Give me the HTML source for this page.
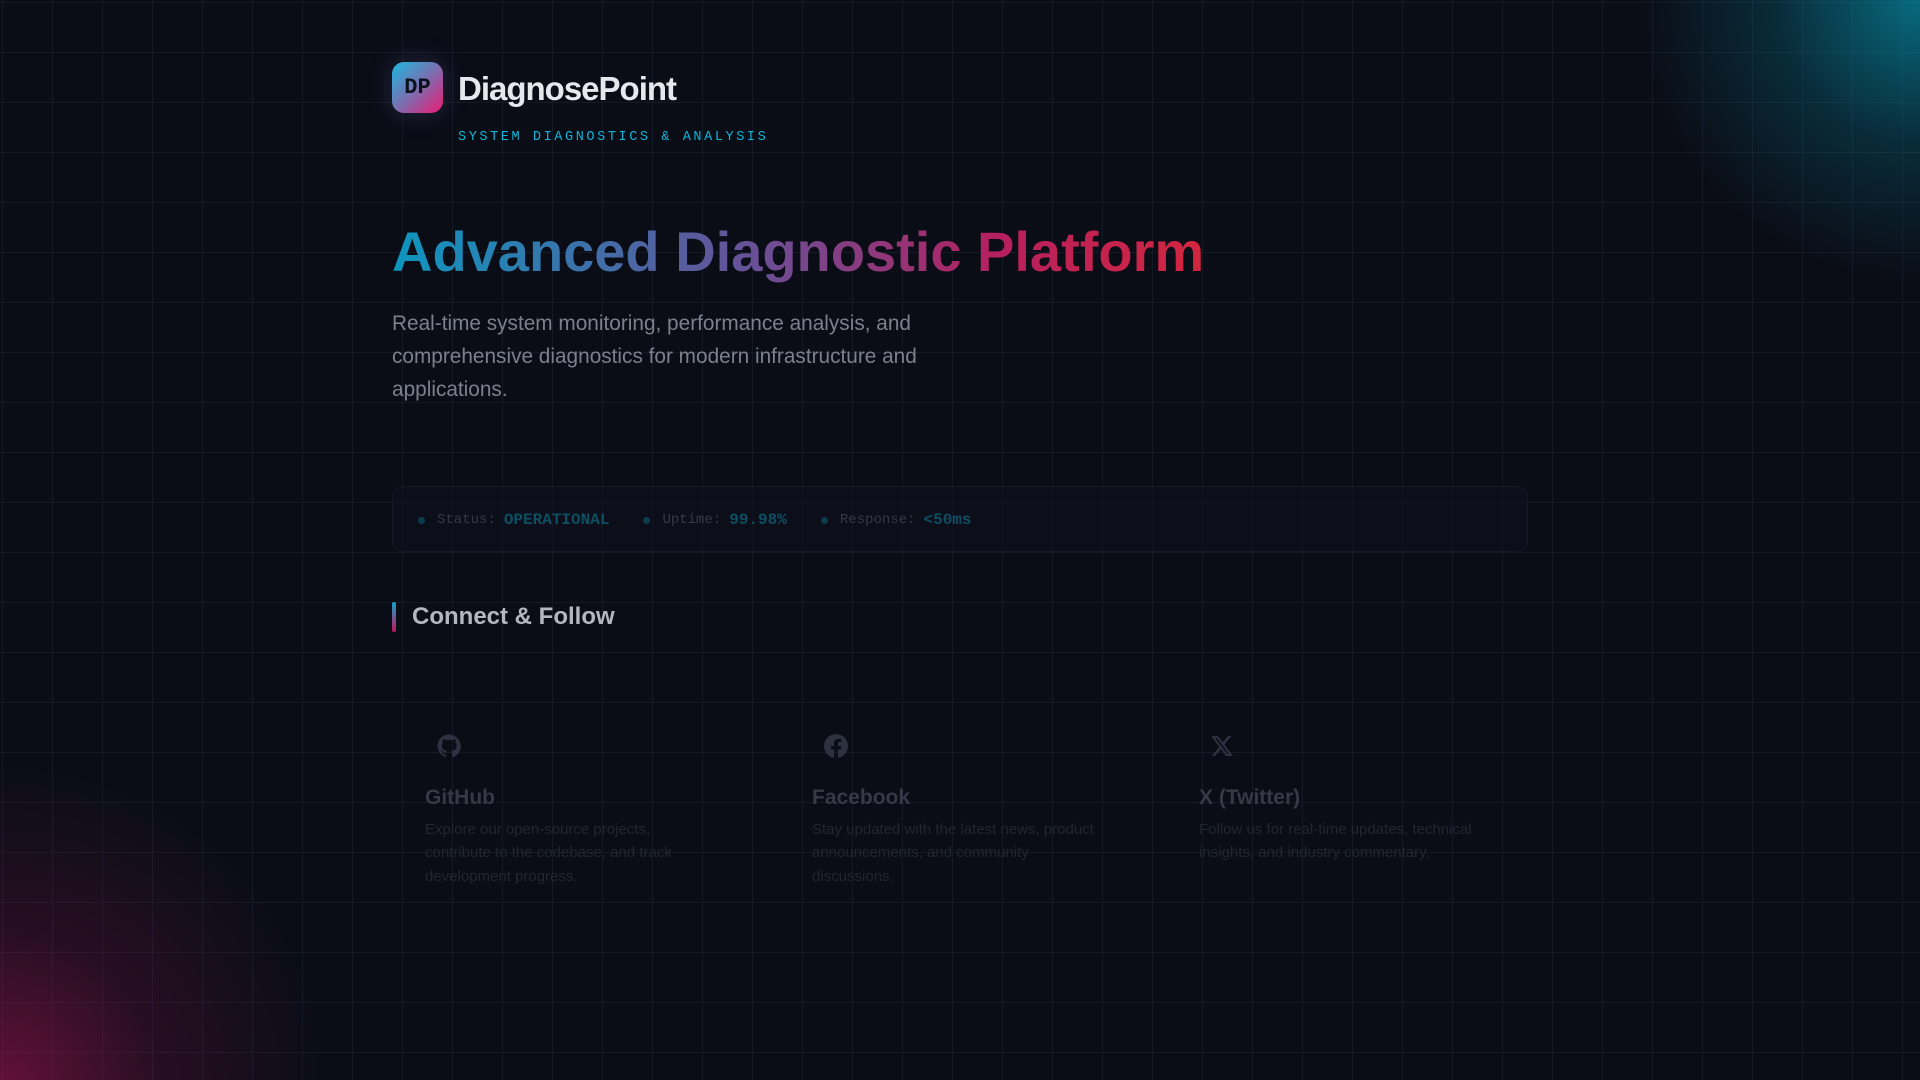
<!DOCTYPE html>
<html><head><meta charset="utf-8"><style>
*{margin:0;padding:0;box-sizing:border-box}
html,body{width:1920px;height:1080px;overflow:hidden}
body{background:#0a0d16;font-family:"Liberation Sans",sans-serif;position:relative}
.bg{position:absolute;left:0;top:0;width:1920px;height:1080px;overflow:hidden}
.grid{position:absolute;inset:0;background-image:linear-gradient(#141926 1px,transparent 1px),linear-gradient(90deg,#141926 1px,transparent 1px);background-size:50px 50px;background-position:2px 2px}
.g1{position:absolute;left:1630px;top:-290px;width:580px;height:580px;border-radius:50%;background:radial-gradient(circle,rgba(6,182,212,.55) 0%,rgba(6,150,180,.22) 35%,rgba(10,13,22,0) 68%)}
.g2{position:absolute;left:-330px;top:760px;width:660px;height:660px;border-radius:50%;background:radial-gradient(circle,rgba(190,20,90,.5) 0%,rgba(150,20,80,.2) 35%,rgba(10,13,22,0) 70%)}
.logo{position:absolute;left:392px;top:62px;width:51px;height:51px;border-radius:12px;background:linear-gradient(135deg,#1cb8de,#7a6fb0 50%,#ec1a72);box-shadow:0 0 25px rgba(120,120,200,.25);font-family:"Liberation Mono",monospace;font-weight:bold;font-size:22px;color:#0d111c;display:flex;align-items:center;justify-content:center}
.brand{position:absolute;left:458px;top:70px;font-size:33px;font-weight:bold;color:#e6e8ee;letter-spacing:-1px}
.sub{position:absolute;left:458px;top:130px;font-family:"Liberation Mono",monospace;font-size:13.5px;letter-spacing:2.6px;color:#0fb4d8}
h1{position:absolute;left:392px;top:219px;font-size:56px;font-weight:bold;background:linear-gradient(90deg,#0d96bf 0%,#6a4f96 45%,#b6205e 75%,#d3263f 100%);-webkit-background-clip:text;background-clip:text;color:transparent;white-space:nowrap}
.p{position:absolute;left:392px;top:307px;width:580px;font-size:20.8px;line-height:33px;color:#7c808c}
.stat{position:absolute;left:392px;top:486px;width:1136px;height:66px;border:1px solid #141a26;border-radius:12px;background:rgba(14,18,28,.5);font-family:"Liberation Mono",monospace;display:flex;align-items:center;padding-left:25px;font-size:14px;color:#343a46;padding-top:2px}
.stat .d{width:7px;height:7px;border-radius:50%;background:#0b3c4e;margin-right:12px}
.stat b{color:#0e4e62;font-size:16px;margin-left:8px;margin-right:34px}
.cf{position:absolute;left:392px;top:602px;width:4px;height:30px;border-radius:2px;background:linear-gradient(#12a4cc,#c0155e)}
.cft{position:absolute;left:412px;top:603px;font-size:24px;font-weight:bold;color:#b3b7c0}
.ct{position:absolute;top:786px;font-size:21px;font-weight:bold;color:#363946}
.cd{position:absolute;top:818px;width:290px;font-size:15px;line-height:23.3px;color:#22262f}
</style></head><body>
<div class="bg"><div class="grid"></div><div class="g1"></div><div class="g2"></div></div>
<div class="logo">DP</div>
<div class="brand">DiagnosePoint</div>
<div class="sub">SYSTEM DIAGNOSTICS &amp; ANALYSIS</div>
<h1>Advanced Diagnostic Platform</h1>
<div class="p">Real-time system monitoring, performance analysis, and comprehensive diagnostics for modern infrastructure and applications.</div>
<div class="stat"><span class="d"></span>Status:<b>OPERATIONAL</b><span class="d"></span>Uptime:<b>99.98%</b><span class="d"></span>Response:<b>&lt;50ms</b></div>
<div class="cf"></div><div class="cft">Connect &amp; Follow</div>

<svg style="position:absolute;left:437px;top:734px" width="24" height="24" viewBox="0 0 24 24"><path fill="#2e3240" d="M12 .5C5.6.5.5 5.6.5 12c0 5.1 3.3 9.4 7.9 10.9.6.1.8-.3.8-.6v-2c-3.2.7-3.9-1.5-3.9-1.5-.5-1.3-1.3-1.7-1.3-1.7-1-.7.1-.7.1-.7 1.2.1 1.8 1.2 1.8 1.2 1 1.8 2.800 1.3 3.500 1 .1-.8.4-1.3.7-1.6-2.6-.3-5.3-1.3-5.3-5.7 0-1.3.5-2.3 1.2-3.1-.1-.3-.5-1.5.1-3.1 0 0 1-.3 3.2 1.2a11 11 0 0 1 5.8 0c2.2-1.5 3.2-1.2 3.2-1.2.6 1.6.2 2.8.1 3.1.7.8 1.2 1.9 1.2 3.1 0 4.4-2.7 5.4-5.3 5.7.4.4.8 1.1.8 2.2v3.3c0 .3.2.7.8.6 4.6-1.5 7.9-5.8 7.9-10.9C23.5 5.6 18.4.5 12 .5z"/></svg>
<div class="ct" style="left:425px">GitHub</div>
<div class="cd" style="left:425px">Explore our open-source projects, contribute to the codebase, and track development progress.</div>

<svg style="position:absolute;left:824px;top:734px" width="24" height="24" viewBox="0 0 24 24"><path fill="#2e3240" d="M24 12a12 12 0 1 0-13.9 11.9v-8.4H7.1V12h3V9.4c0-3 1.8-4.7 4.5-4.7 1.3 0 2.7.2 2.7.2v3h-1.5c-1.5 0-2 .9-2 1.9V12h3.4l-.5 3.5h-2.9v8.4A12 12 0 0 0 24 12z"/></svg>
<div class="ct" style="left:812px">Facebook</div>
<div class="cd" style="left:812px">Stay updated with the latest news, product announcements, and community discussions.</div>

<svg style="position:absolute;left:1211px;top:736px" width="22" height="20" viewBox="0 0 24 22"><path fill="#2e3240" d="M18.9 0h3.7l-8 9.2L24 22h-7.4l-5.8-7.6L4.2 22H.5l8.6-9.8L0 0h7.6l5.2 6.9zm-1.3 19.8h2L6.5 2.1H4.3z"/></svg>
<div class="ct" style="left:1199px">X (Twitter)</div>
<div class="cd" style="left:1199px">Follow us for real-time updates, technical insights, and industry commentary.</div>
</body></html>
